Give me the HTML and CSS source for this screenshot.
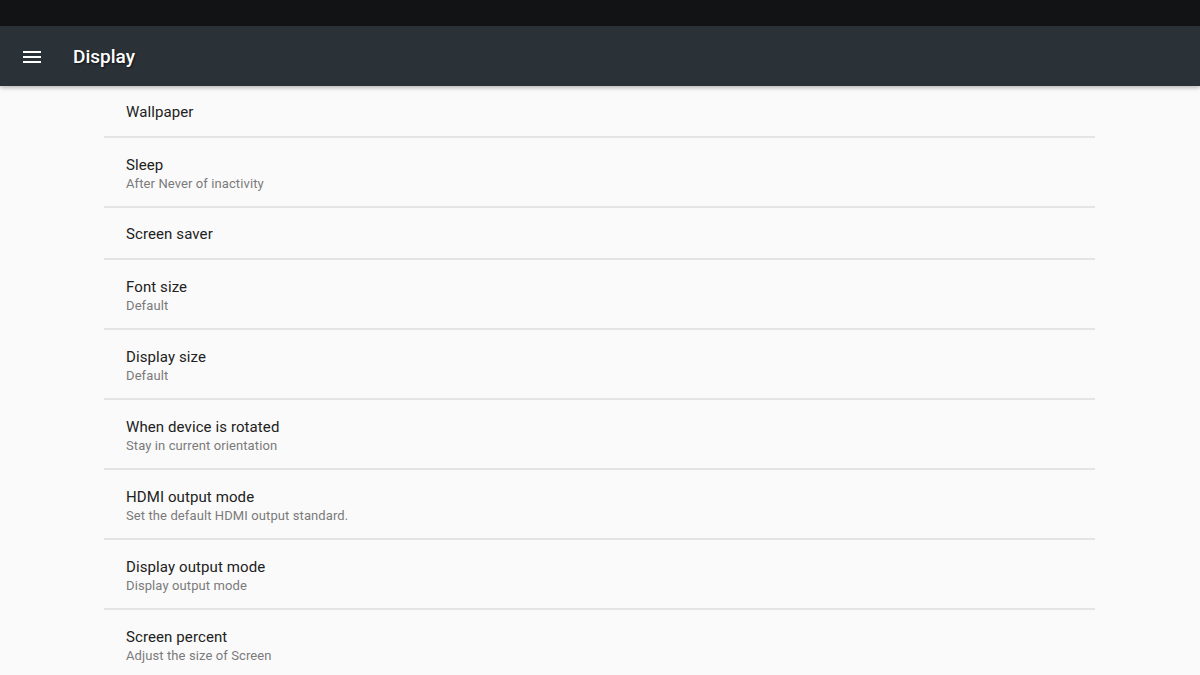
FILE: index.html
```html
<!DOCTYPE html>
<html lang="en">
<head>
    <meta charset="UTF-8">
    <title>Display</title>
    <link rel="stylesheet" href="styles.css">
</head>
<body>
    <div class="status-bar"></div>

    <div class="app-bar">
        <svg class="menu-icon" width="18" height="12" viewBox="0 0 18 12">
            <rect x="0" y="0" width="18" height="2" fill="#fff"/>
            <rect x="0" y="5" width="18" height="2" fill="#fff"/>
            <rect x="0" y="10" width="18" height="2" fill="#fff"/>
        </svg>
        <h1 class="app-title">Display</h1>
    </div>

    <div class="settings-list">
        <div class="pref single">
            <div class="pref-title">Wallpaper</div>
        </div>
        <div class="pref">
            <div class="pref-title">Sleep</div>
            <div class="pref-summary">After Never of inactivity</div>
        </div>
        <div class="pref single">
            <div class="pref-title">Screen saver</div>
        </div>
        <div class="pref">
            <div class="pref-title">Font size</div>
            <div class="pref-summary">Default</div>
        </div>
        <div class="pref">
            <div class="pref-title">Display size</div>
            <div class="pref-summary">Default</div>
        </div>
        <div class="pref">
            <div class="pref-title">When device is rotated</div>
            <div class="pref-summary">Stay in current orientation</div>
        </div>
        <div class="pref">
            <div class="pref-title">HDMI output mode</div>
            <div class="pref-summary">Set the default HDMI output standard.</div>
        </div>
        <div class="pref">
            <div class="pref-title">Display output mode</div>
            <div class="pref-summary">Display output mode</div>
        </div>
        <div class="pref">
            <div class="pref-title">Screen percent</div>
            <div class="pref-summary">Adjust the size of Screen</div>
        </div>
    </div>
</body>
</html>
```

FILE: styles.css
```css
* {
    margin: 0;
    padding: 0;
    box-sizing: border-box;
}

body {
    font-family: Roboto, 'Noto Sans', sans-serif;
    background: #fafafa;
    overflow: hidden;
}

.status-bar {
    height: 26px;
    background: #121315;
}

.app-bar {
    height: 60px;
    background: #2a3137;
    display: flex;
    align-items: center;
    padding-left: 23px;
    box-shadow: 0 2px 4px rgba(0,0,0,0.25);
    position: relative;
    z-index: 1;
}

.menu-icon {
    display: block;
    margin-top: 1px;
}

.app-title {
    margin-left: 32px;
    color: #fff;
    font-size: 19px;
    font-weight: 500;
    text-shadow: 1px 1px 2px rgba(0,0,0,0.6);
}

.settings-list {
    width: 991px;
    margin-left: 104px;
}

.pref {
    height: 70px;
    padding: 17px 0 0 22px;
    border-bottom: 2px solid #e4e4e4;
}

.pref.single {
    height: 52px;
    padding-top: 2px;
    display: flex;
    align-items: center;
}

.pref-title {
    font-size: 15px;
    line-height: 20px;
    letter-spacing: 0.1px;
    color: #212121;
}

.pref-summary {
    font-size: 13px;
    line-height: 18px;
    letter-spacing: 0.1px;
    color: #7a7a7a;
}
```
